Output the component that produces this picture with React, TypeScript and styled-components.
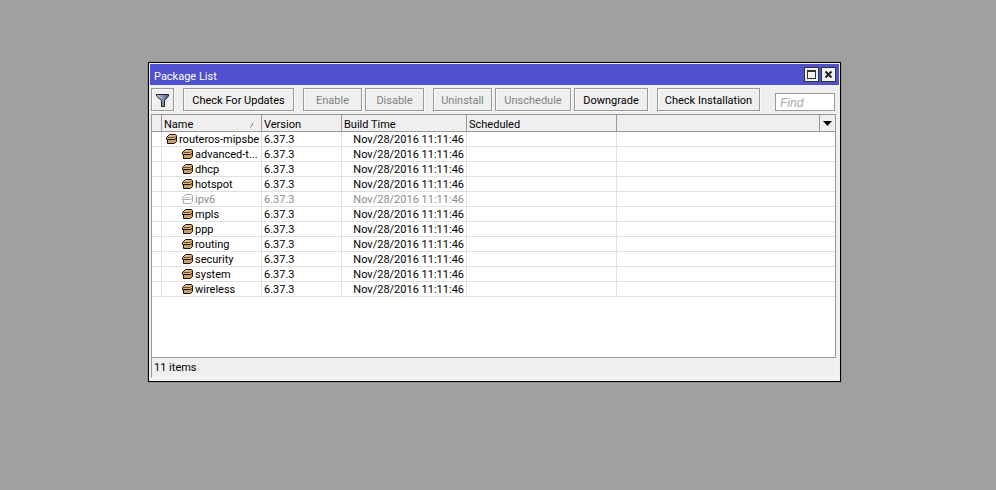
import React from "react";
import styled, { createGlobalStyle } from "styled-components";

const GlobalStyle = createGlobalStyle`
  * { box-sizing: border-box; }
  body {
    margin: 0;
    background: #a0a0a0;
    color: #000;
    font: 11px/12px Roboto, "Liberation Sans", Arial, sans-serif;
  }
  button, input { font: inherit; }
`;

const Desktop = styled.main`
  display: flex;
  min-height: 100vh;
  padding: 62px 155px 108px 148px;
`;

const WindowFrame = styled.section`
  display: flex;
  flex: 1;
  flex-direction: column;
  min-width: 0;
  border: 1px solid #000;
  outline: 1px solid #929292;
  background: #efefef;
  padding: 1px 1px 3px;
`;

const TitleBar = styled.header`
  display: flex;
  align-items: center;
  height: 21px;
  padding: 0 3px 0 4px;
  background: #4e50cc;
  color: #fff;
`;

const Title = styled.h1`
  flex: 1;
  margin: 0;
  padding-top: 4px;
  font-size: 11px;
  font-weight: normal;
`;

const WindowButton = styled.button`
  display: flex;
  align-items: center;
  justify-content: center;
  width: 15px;
  height: 15px;
  margin-left: 2px;
  padding: 0;
  border: 1px solid #333;
  background: #f0f0f0;
`;

const Toolbar = styled.div`
  display: flex;
  align-items: flex-end;
  gap: 9px;
  height: 29px;
  padding: 0 4px 3px 1px;
`;

const ButtonGroup = styled.div`
  display: flex;
  gap: 3px;
`;

const ToolButton = styled.button<{ $width: number }>`
  display: flex;
  align-items: center;
  justify-content: center;
  width: ${(p) => p.$width}px;
  height: 23px;
  padding: 2px 0 0;
  border: 1px solid #999;
  background: #efefef;
  box-shadow: 1px 1px 0 #fafafa, inset 1px 1px 0 #fafafa;
  color: #000;
  white-space: nowrap;
  &:disabled { color: #808080; }
`;

const FindInput = styled.input`
  width: 60px;
  height: 18px;
  margin-left: auto;
  padding: 2px 4px 0;
  border: 1px solid #999;
  background: #fff;
  font-family: "Liberation Sans", Arial, sans-serif;
  font-size: 12px;
  font-style: italic;
  &::placeholder { color: #a8a8a8; opacity: 1; }
`;

const ListPane = styled.div`
  flex: 1;
  margin: 0 3px 0 1px;
  border: 1px solid #999;
  background: #fff;
`;

const Table = styled.table`
  width: 100%;
  table-layout: fixed;
  border-collapse: separate;
  border-spacing: 0;
`;

const HeadCell = styled.th`
  height: 17px;
  padding: 4px 2px 0;
  border-right: 1px solid #999;
  border-bottom: 1px solid #999;
  background: #efefef;
  font-weight: normal;
  text-align: left;
  &:last-child { padding: 0; border-right: 0; }
`;

const HeadContent = styled.div`
  display: flex;
  align-items: center;
  justify-content: space-between;
  padding-right: 4px;
`;

const MenuButton = styled.button`
  display: flex;
  align-items: center;
  justify-content: center;
  width: 100%;
  height: 16px;
  padding: 0;
  border: 0;
  background: transparent;
`;

const Row = styled.tr<{ $muted: boolean }>`
  color: ${(p) => (p.$muted ? "#8c8c8c" : "#000")};
`;

const Cell = styled.td<{ $align?: "right" }>`
  height: 15px;
  padding: 2px 2px 0;
  border-right: 1px solid #e0e0e0;
  border-bottom: 1px solid #e0e0e0;
  text-align: ${(p) => p.$align ?? "left"};
  white-space: nowrap;
  &:last-child { border-right: 0; }
`;

const PackageName = styled.div<{ $level: number }>`
  display: flex;
  align-items: flex-start;
  gap: 2px;
  padding-left: ${(p) => 2 + p.$level * 16}px;
  svg { flex: none; }
`;

const StatusBar = styled.footer`
  height: 20px;
  margin: 0 3px 0 1px;
  padding: 4px 2px 0;
  border-left: 1px solid #999;
  border-right: 1px solid #fafafa;
  border-bottom: 1px solid #fafafa;
`;

const FunnelIcon = () => (
  <svg width="13" height="13" viewBox="0 0 13 13" aria-hidden="true">
    <defs>
      <linearGradient id="funnel">
        <stop offset="0" stopColor="#c3cdea" />
        <stop offset="1" stopColor="#4e5f96" />
      </linearGradient>
    </defs>
    <path d="M.5 .5H12.5V2L8.5 6.5V12.5H5.5V6.5L.5 2Z" fill="url(#funnel)" stroke="#222" />
  </svg>
);

const PackageIcon = ({ muted }: { muted: boolean }) => {
  const line = muted ? "#aaa" : "#1c1208";
  const face = muted ? "#fff" : "#c99f66";
  return (
    <svg width="11" height="10" viewBox="0 0 11 10" aria-hidden="true">
      <path d="M1.5 5V9.5H8.5L10.5 7.5V4Z" fill={face} stroke={line} />
      <path d="M.5 5.5V3.5L3.5 .5H9.5L10.5 1.5V4L8.5 5.5Z" fill={muted ? "#fff" : "#dbb888"} stroke={line} />
      <path d="M1.5 3.5H8L10 1.5" fill="none" stroke={muted ? "#ccc" : "#6b4c24"} />
    </svg>
  );
};

const MaximizeIcon = () => (
  <svg width="9" height="9" viewBox="0 0 9 9" shapeRendering="crispEdges" aria-hidden="true">
    <path d="M0 0H9V9H0ZM1 2V8H8V2Z" fill="#333" fillRule="evenodd" />
  </svg>
);

const CloseIcon = () => (
  <svg width="7" height="7" viewBox="0 0 7 7" aria-hidden="true">
    <path d="M.5 .5L6.5 6.5M6.5 .5L.5 6.5" stroke="#222" strokeWidth="2" />
  </svg>
);

const SortIcon = () => (
  <svg width="5" height="6" viewBox="0 0 5 6" aria-hidden="true">
    <path d="M.5 5.5L3.5 .5" stroke="#777" />
    <path d="M4 .5L4.5 5.5H1" fill="none" stroke="#fff" />
  </svg>
);

const ArrowIcon = () => (
  <svg width="9" height="5" viewBox="0 0 9 5" aria-hidden="true">
    <path d="M0 0H9L4.5 5Z" fill="#000" />
  </svg>
);

const actionGroups = [
  [{ label: "Check For Updates", width: 111, disabled: false }],
  [
    { label: "Enable", width: 59, disabled: true },
    { label: "Disable", width: 59, disabled: true },
  ],
  [
    { label: "Uninstall", width: 59, disabled: true },
    { label: "Unschedule", width: 76, disabled: true },
    { label: "Downgrade", width: 74, disabled: false },
  ],
  [{ label: "Check Installation", width: 103, disabled: false }],
];

const packages = [
  "routeros-mipsbe",
  "advanced-t...",
  "dhcp",
  "hotspot",
  "ipv6",
  "mpls",
  "ppp",
  "routing",
  "security",
  "system",
  "wireless",
].map((name, index) => ({
  name,
  level: index === 0 ? 0 : 1,
  muted: name === "ipv6",
  version: "6.37.3",
  buildTime: "Nov/28/2016 11:11:46",
}));

export default function App() {
  return (
    <>
      <GlobalStyle />
      <Desktop>
        <WindowFrame aria-label="Package List">
          <TitleBar>
            <Title>Package List</Title>
            <WindowButton aria-label="Maximize"><MaximizeIcon /></WindowButton>
            <WindowButton aria-label="Close"><CloseIcon /></WindowButton>
          </TitleBar>
          <Toolbar>
            <ToolButton $width={23} aria-label="Filter"><FunnelIcon /></ToolButton>
            {actionGroups.map((group) => (
              <ButtonGroup key={group[0].label}>
                {group.map((a) => (
                  <ToolButton key={a.label} $width={a.width} disabled={a.disabled}>{a.label}</ToolButton>
                ))}
              </ButtonGroup>
            ))}
            <FindInput type="text" placeholder="Find" aria-label="Find" />
          </Toolbar>
          <ListPane>
            <Table>
              <colgroup>
                <col width="10" />
                <col width="100" />
                <col width="80" />
                <col width="125" />
                <col width="150" />
                <col />
                <col width="15" />
              </colgroup>
              <thead>
                <tr>
                  <HeadCell />
                  <HeadCell aria-sort="ascending"><HeadContent>Name<SortIcon /></HeadContent></HeadCell>
                  <HeadCell>Version</HeadCell>
                  <HeadCell>Build Time</HeadCell>
                  <HeadCell>Scheduled</HeadCell>
                  <HeadCell />
                  <HeadCell><MenuButton aria-label="Columns"><ArrowIcon /></MenuButton></HeadCell>
                </tr>
              </thead>
              <tbody>
                {packages.map((p) => (
                  <Row key={p.name} $muted={p.muted}>
                    <Cell />
                    <Cell>
                      <PackageName $level={p.level}>
                        <PackageIcon muted={p.muted} />
                        <span>{p.name}</span>
                      </PackageName>
                    </Cell>
                    <Cell>{p.version}</Cell>
                    <Cell $align="right">{p.buildTime}</Cell>
                    <Cell />
                    <Cell colSpan={2} />
                  </Row>
                ))}
              </tbody>
            </Table>
          </ListPane>
          <StatusBar>{packages.length} items</StatusBar>
        </WindowFrame>
      </Desktop>
    </>
  );
}
